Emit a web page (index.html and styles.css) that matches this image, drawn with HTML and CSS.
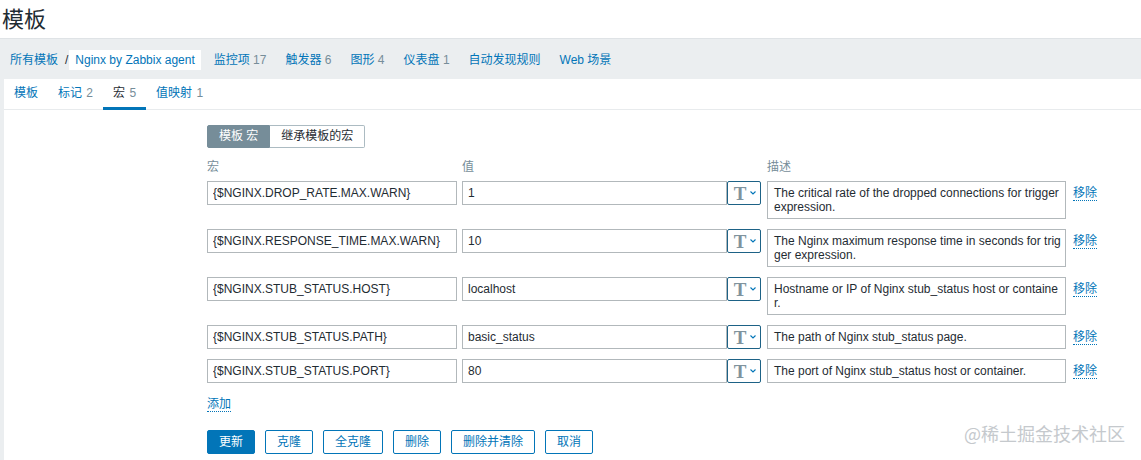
FILE: index.html
```html
<!DOCTYPE html>
<html lang="zh-CN">
<head>
<meta charset="utf-8">
<title>模板</title>
<link rel="stylesheet" href="styles.css">
</head>
<body>
<header class="page-header">
  <h1 class="page-title">模板</h1>
</header>
<nav class="crumbs">
  <a class="crumb" href="#">所有模板</a>
  <span class="sep">/</span>
  <a class="crumb current" href="#">Nginx by Zabbix agent</a>
  <a class="crumb gap" href="#">监控项 <span class="count">17</span></a>
  <a class="crumb gap" href="#">触发器 <span class="count">6</span></a>
  <a class="crumb gap" href="#">图形 <span class="count">4</span></a>
  <a class="crumb gap" href="#">仪表盘 <span class="count">1</span></a>
  <a class="crumb gap" href="#">自动发现规则</a>
  <a class="crumb gap" href="#">Web 场景</a>
</nav>
<main class="wrap">
  <div class="tabs">
    <a class="tab" href="#">模板</a>
    <a class="tab" href="#">标记 <span class="count">2</span></a>
    <a class="tab active" href="#">宏 <span class="count">5</span></a>
    <a class="tab" href="#">值映射 <span class="count">1</span></a>
  </div>
  <form class="form">
    <div class="seg">
      <span class="seg-btn on">模板 宏</span>
      <span class="seg-btn">继承模板的宏</span>
    </div>
    <div class="heads">
      <span class="col-macro">宏</span>
      <span class="col-value">值</span>
      <span class="col-desc">描述</span>
    </div>
    <div class="rows">
      <div class="row">
        <input class="input col-macro" value="{$NGINX.DROP_RATE.MAX.WARN}">
        <div class="col-value"><input class="input value-input" value="1"><button type="button" class="type-btn"><span class="t">T</span><svg width="6" height="4" viewBox="0 0 6 4"><path d="M0.5 0.5 L3 3 L5.5 0.5" fill="none" stroke="#0275b8" stroke-width="1.1"/></svg></button></div>
        <textarea class="input desc col-desc">The critical rate of the dropped connections for trigger expression.</textarea>
        <a class="remove" href="#">移除</a>
      </div>
      <div class="row">
        <input class="input col-macro" value="{$NGINX.RESPONSE_TIME.MAX.WARN}">
        <div class="col-value"><input class="input value-input" value="10"><button type="button" class="type-btn"><span class="t">T</span><svg width="6" height="4" viewBox="0 0 6 4"><path d="M0.5 0.5 L3 3 L5.5 0.5" fill="none" stroke="#0275b8" stroke-width="1.1"/></svg></button></div>
        <textarea class="input desc col-desc">The Nginx maximum response time in seconds for trigger expression.</textarea>
        <a class="remove" href="#">移除</a>
      </div>
      <div class="row">
        <input class="input col-macro" value="{$NGINX.STUB_STATUS.HOST}">
        <div class="col-value"><input class="input value-input" value="localhost"><button type="button" class="type-btn"><span class="t">T</span><svg width="6" height="4" viewBox="0 0 6 4"><path d="M0.5 0.5 L3 3 L5.5 0.5" fill="none" stroke="#0275b8" stroke-width="1.1"/></svg></button></div>
        <textarea class="input desc col-desc">Hostname or IP of Nginx stub_status host or container.</textarea>
        <a class="remove" href="#">移除</a>
      </div>
      <div class="row">
        <input class="input col-macro" value="{$NGINX.STUB_STATUS.PATH}">
        <div class="col-value"><input class="input value-input" value="basic_status"><button type="button" class="type-btn"><span class="t">T</span><svg width="6" height="4" viewBox="0 0 6 4"><path d="M0.5 0.5 L3 3 L5.5 0.5" fill="none" stroke="#0275b8" stroke-width="1.1"/></svg></button></div>
        <textarea class="input desc one col-desc">The path of Nginx stub_status page.</textarea>
        <a class="remove" href="#">移除</a>
      </div>
      <div class="row">
        <input class="input col-macro" value="{$NGINX.STUB_STATUS.PORT}">
        <div class="col-value"><input class="input value-input" value="80"><button type="button" class="type-btn"><span class="t">T</span><svg width="6" height="4" viewBox="0 0 6 4"><path d="M0.5 0.5 L3 3 L5.5 0.5" fill="none" stroke="#0275b8" stroke-width="1.1"/></svg></button></div>
        <textarea class="input desc one col-desc">The port of Nginx stub_status host or container.</textarea>
        <a class="remove" href="#">移除</a>
      </div>
    </div>
    <a class="add" href="#">添加</a>
    <div class="actions">
      <button type="button" class="btn primary">更新</button>
      <button type="button" class="btn">克隆</button>
      <button type="button" class="btn">全克隆</button>
      <button type="button" class="btn">删除</button>
      <button type="button" class="btn">删除并清除</button>
      <button type="button" class="btn">取消</button>
    </div>
  </form>
</main>
<div class="watermark">@稀土掘金技术社区</div>
</body>
</html>
```
FILE: styles.css
```css
* { box-sizing: border-box; }

html, body { height: 100%; }

body {
  margin: 0;
  background: #ebeef0;
  font-family: "Liberation Sans", Arial, "Noto Sans CJK SC", sans-serif;
  font-size: 12px;
  color: #1f2c33;
  overflow: hidden;
}

a { text-decoration: none; }

.page-header {
  background: #fff;
  height: 38px;
  padding-left: 2px;
}

.page-title {
  margin: 0;
  font-family: "Noto Sans CJK SC", sans-serif;
  font-size: 22px;
  font-weight: normal;
  line-height: 34px;
  color: #1f2c33;
}

.crumbs {
  display: flex;
  align-items: flex-start;
  height: 41px;
  border-top: 1px solid #dfe3e6;
  padding: 11px 0 0 4px;
}

.crumb {
  padding: 0 6px;
  height: 20px;
  line-height: 20px;
  color: #0275b8;
  white-space: nowrap;
}

.crumb.current { background: #fff; }
.crumb.gap { margin-left: 7px; }

.sep {
  line-height: 20px;
  padding: 0 1px;
  color: #1f2c33;
}

.count { color: #768d99; }

.wrap {
  background: #fff;
  margin-left: 4px;
  height: calc(100% - 79px);
  position: relative;
}

.tabs {
  display: flex;
  height: 31px;
  border-bottom: 1px solid #e8ebed;
}

.tab {
  height: 31px;
  padding: 0 10px;
  line-height: 28px;
  color: #0275b8;
  border-bottom: 3px solid transparent;
  white-space: nowrap;
}

.tab .count { margin-left: 1px; }

.tab.active {
  color: #1f2c33;
  border-bottom-color: #0275b8;
}

.form {
  padding: 15px 0 0 203px;
}

.seg { display: flex; }

.seg-btn {
  height: 23px;
  line-height: 21px;
  padding: 0 11px;
  border: 1px solid #acbbc2;
  background: #fff;
  color: #1f2c33;
  white-space: nowrap;
}

.seg-btn.on {
  background: #768d99;
  border-color: #768d99;
  color: #fff;
  border-radius: 2px 0 0 2px;
}

.seg-btn + .seg-btn {
  border-left: none;
  border-radius: 0 2px 2px 0;
}

.heads {
  display: flex;
  margin-top: 12px;
  line-height: 15px;
  color: #768d99;
}

.rows { margin-top: 6px; }

.row {
  display: flex;
  align-items: flex-start;
  margin-bottom: 10px;
}

.input {
  height: 24px;
  margin: 0;
  border: 1px solid #b2b8bb;
  border-radius: 0;
  padding: 0 5px;
  font: inherit;
  color: #1f2c33;
  background: #fff;
  outline: none;
}

.col-macro { width: 250px; margin-right: 5px; flex: none; }
.col-value { width: 299px; margin-right: 6px; display: flex; flex: none; }
.col-desc { width: 299px; margin-right: 7px; flex: none; }

.value-input { width: 265px; margin-right: 0; }

.type-btn {
  width: 34px;
  height: 24px;
  margin: 0;
  padding: 0 0 0 2px;
  border: 1px solid #1d6286;
  border-radius: 2px;
  background: #fff;
  display: flex;
  align-items: center;
  justify-content: center;
  gap: 4px;
  flex: none;
}

.type-btn .t {
  font-family: "Liberation Serif", serif;
  font-size: 19px;
  font-weight: bold;
  line-height: 19px;
  color: #7f939d;
}

.desc {
  display: block;
  height: 38px;
  padding: 4px 4px 4px 6px;
  line-height: 14px;
  resize: none;
  overflow: hidden;
  word-break: break-all;
}

.desc.one { height: 24px; }

.remove {
  margin-top: 5px;
  line-height: 14px;
  color: #0275b8;
  border-bottom: 1px dotted #0275b8;
}

.add {
  display: inline-block;
  margin-top: 4px;
  line-height: 14px;
  color: #0275b8;
  border-bottom: 1px dotted #0275b8;
}

.actions {
  display: flex;
  gap: 10px;
  margin-top: 18px;
}

.btn {
  height: 24px;
  margin: 0;
  padding: 0 11px;
  border: 1px solid #0275b8;
  border-radius: 2px;
  background: #fff;
  color: #0275b8;
  font: inherit;
  line-height: 22px;
  white-space: nowrap;
}

.btn.primary {
  background: #0275b8;
  color: #fff;
}

.watermark {
  position: absolute;
  right: 16px;
  top: 420px;
  font-family: "Noto Sans CJK SC", sans-serif;
  font-size: 18px;
  line-height: 26px;
  color: #c5c9cd;
  letter-spacing: 0;
}
```
